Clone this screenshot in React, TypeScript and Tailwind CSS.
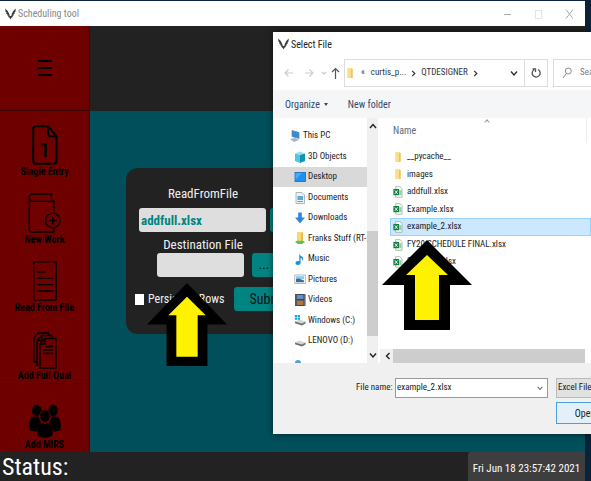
import type { ReactNode } from "react";

function Emblem({ className }: { className: string }) {
  return (
    <svg viewBox="0 0 12 12" className={className} fill="#3a3a3a" aria-hidden="true">
      <path d="M0.2 0L3 2.6L4.6 6L5.2 8.2H6.8L7.4 6L9 2.6L11.8 0L11.400 3.600L10.400 4.400L10.600 5.600L9.300 6.200L9.500 7.600L8.300 8L8.400 9.400L7 10.200L6 12L5 10.200L3.600 9.400L3.700 8L2.500 7.600L2.700 6.200L1.400 5.600L1.600 4.400L0.600 3.600Z" />
    </svg>
  );
}

function SingleEntryIcon() {
  return (
    <svg viewBox="0 0 26 40" className="h-10 w-[26px]" fill="none" stroke="#000" strokeWidth="2" aria-hidden="true">
      <path d="M4 1.2H16L24.5 11V35.5Q24.5 38.8 21.5 38.8H4Q1.2 38.8 1.2 35.5V4.5Q1.2 1.2 4 1.2Z" />
      <path d="M16 1.5V8Q16 11.3 19 11.3H24.5" />
      <path d="M9.5 19.500H13.500V32" strokeWidth="2.6" />
    </svg>
  );
}

function NewWorkIcon() {
  return (
    <svg viewBox="0 0 33 40" className="h-10 w-[33px]" fill="none" stroke="#000" strokeWidth="1.3" aria-hidden="true">
      <path d="M24 1H5Q1.2 1 1.2 5V36Q1.2 39 4 39H26V35.5" />
      <path d="M1.2 5.5Q2 8.3 5 8.3H26V18.5M24 1Q22 4.5 24.5 8" />
      <circle cx="24.8" cy="27.5" r="7.3" />
      <path d="M24.8 23.5V31.5M21 27.5H28.6" strokeWidth="1.6" />
    </svg>
  );
}

function ReadFileIcon() {
  return (
    <svg viewBox="0 0 24 40" className="h-10 w-6" fill="none" stroke="#000" strokeWidth="1.3" aria-hidden="true">
      <rect x="0.8" y="0.8" width="22.4" height="38.4" rx="1" />
      <path d="M4 11H13M4 17.3H20M4 23.7H20M4 30H20" />
    </svg>
  );
}

function FullQualIcon() {
  return (
    <svg viewBox="0 0 24 37" className="h-[37px] w-6" fill="none" stroke="#000" strokeWidth="1.3" aria-hidden="true">
      <path d="M12 6.5H23V36H7V12Z" />
      <path d="M12 6.5V12H7" />
      <path d="M7 33H4V8.5L9 3.5H19V6.5M9 3.5V8.5H4" />
      <path d="M4 30H1V5.5L5.5 1H15.5V3.5" />
      <path d="M13 14.5H20M10 18H20M10 21.5H20" />
    </svg>
  );
}

function PeopleIcon() {
  return (
    <svg viewBox="0 0 32 34" className="h-[34px] w-8" fill="#000" aria-hidden="true">
      <ellipse cx="7.8" cy="6.5" rx="4.7" ry="5.7" />
      <ellipse cx="24.2" cy="6.5" rx="4.7" ry="5.7" />
      <path d="M0.3 26V20.5Q0.3 12.8 6 12.5H9.5L12 19.5Q8 21.5 7.8 27.5Q3 27.5 0.3 26Z" />
      <path d="M31.7 26V20.5Q31.7 12.8 26 12.5H22.5L20 19.5Q24 21.5 24.2 27.5Q29 27.5 31.7 26Z" />
      <ellipse cx="16" cy="12" rx="5.3" ry="6.4" stroke="#6e0000" strokeWidth="0.9" />
      <path d="M8.3 31V27Q8.3 19.5 14 19L16 20.5L18 19Q23.7 19.5 23.7 27V31Q21 33.8 16 33.8Q11 33.8 8.3 31Z" />
    </svg>
  );
}

function NavIcon({ kind }: { kind: string }) {
  return (
    <svg viewBox="0 0 12 14" className="h-3.5 w-3 shrink-0" aria-hidden="true">
      {kind === "pc" && (
        <>
          <path d="M3 1.5L10 3.5V9.5L3 7.5Z" fill="#2f8fdc" stroke="#6a7f92" strokeWidth="0.7" />
          <path d="M1 10L6 9L10 11L5 13Z" fill="#9fb4c6" />
        </>
      )}
      {kind === "cube" && (
        <>
          <path d="M1 3.5L6 1.5L11 3.5L6 5Z" fill="#8fe3f2" />
          <path d="M1 3.5L6 5V13L1 11Z" fill="#4cc9e0" />
          <path d="M11 3.5L6 5V13L11 11Z" fill="#1593b5" />
        </>
      )}
      {kind === "desktop" && (
        <>
          <rect x="1" y="2.5" width="10.5" height="9" fill="#1e90ee" stroke="#0f6dc0" strokeWidth="0.8" />
          <path d="M1.5 10L8 3H1.5Z" fill="#46a9f7" />
        </>
      )}
      {kind === "doc" && (
        <>
          <path d="M2 1.5H8L10.5 4V12.5H2Z" fill="#eef2f5" stroke="#9aa6b0" strokeWidth="0.8" />
          <path d="M3.5 5H9V9H3.5Z" fill="#5ea7da" />
          <path d="M3.5 10.5H9" stroke="#7f95a8" />
        </>
      )}
      {kind === "down" && <path d="M4.2 1.5H7.8V6.5H11L6 12.5L1 6.5H4.2Z" fill="#2f86de" />}
      {kind === "share" && (
        <>
          <path d="M3 1H9V11H3Z" fill="#f8d775" />
          <path d="M7 2H9V11H7Z" fill="#e8bb4c" />
          <path d="M1 11Q3 8.500 6 10Q9 8.500 11 11L8 13H4Z" fill="#5fc24c" />
        </>
      )}
      {kind === "music" && (
        <>
          <ellipse cx="4" cy="11" rx="2.6" ry="1.9" fill="#1b8fe0" />
          <path d="M5.3 11V1.5Q6 4 8.5 5Q10 6.5 8.5 9Q8.7 6.5 6.6 6V11Z" fill="#1b8fe0" />
        </>
      )}
      {kind === "pictures" && (
        <>
          <rect x="0.8" y="3" width="10.5" height="8.5" fill="#fff" stroke="#9da6ad" strokeWidth="0.8" />
          <path d="M2 4.2H10V7H2Z" fill="#8cc9ef" />
          <path d="M2 10.3V7L5 6.5L10 8.5V10.3Z" fill="#3d6f8c" />
        </>
      )}
      {kind === "videos" && (
        <>
          <rect x="1" y="1" width="10.5" height="12" fill="#3b4452" />
          <path d="M3 2H9.5V6H3Z" fill="#5f8fd0" />
          <path d="M3 7.5H9.5V12H3Z" fill="#b0763b" />
          <path d="M2 1.5V13M10.6 1.5V13" stroke="#c9ced6" strokeWidth="0.6" strokeDasharray="1 1" />
        </>
      )}
      {(kind === "drive" || kind === "windrive") && (
        <>
          <path d="M1 8.5L5 6.5L11.5 8.5L8 10.5Z" fill="#d3d7da" />
          <path d="M1 8.5L8 10.5V12.5L1 10.2ZM8 10.5L11.5 8.5V10.5L8 12.5Z" fill="#6c7176" />
        </>
      )}
      {kind === "windrive" && <path d="M0.8 2H3V4H0.8ZM3.6 2H6V4H3.6ZM0.8 4.6H3V6.8H0.8ZM3.6 4.6H6V6.8H3.6Z" fill="#13a4e8" />}
    </svg>
  );
}

function FolderIcon() {
  return (
    <svg viewBox="0 0 10 13" className="h-3 w-2.5 shrink-0" aria-hidden="true">
      <path d="M2 1H7V12H2Z" fill="#fbdf8b" />
      <path d="M6 2H8V12H6Z" fill="#eec562" />
    </svg>
  );
}

function ExcelIcon() {
  return (
    <svg viewBox="0 0 10 13" className="h-3 w-2.5 shrink-0" aria-hidden="true">
      <path d="M2.5 0.7H7L9.4 3V12.2H2.5Z" fill="#fff" stroke="#8b9a91" strokeWidth="0.7" />
      <path d="M6.5 4.5H8.8V10H6.5Z" fill="#8ed0a6" />
      <rect x="0" y="3.2" width="6.2" height="6.8" fill="#128043" />
      <path d="M1.6 4.8L4.6 8.5M4.6 4.8L1.6 8.5" stroke="#fff" strokeWidth="1" />
    </svg>
  );
}

function Chevron({ d, className }: { d: string; className: string }) {
  return (
    <svg viewBox="0 0 8 8" className={className} fill="none" stroke="currentColor" strokeWidth="1.4" aria-hidden="true">
      <path d={d} />
    </svg>
  );
}

const UP = "M1 6L4 2.5L7 6";
const DOWN = "M1 2.5L4 6L7 2.5";
const LEFT = "M5.5 1L2.5 4L5.5 7";
const RIGHT = "M2.5 1L5.5 4L2.5 7";

function SideButton({ icon, label }: { icon: ReactNode; label: string }) {
  return (
    <button className="flex h-[68px] w-full flex-col items-center justify-end">
      {icon}
      <span className="text-[10px] leading-[14px] font-bold whitespace-nowrap">{label}</span>
    </button>
  );
}

const places = [
  ["pc", "This PC"],
  ["cube", "3D Objects"],
  ["desktop", "Desktop"],
  ["doc", "Documents"],
  ["down", "Downloads"],
  ["share", "Franks Stuff (RT-."],
  ["music", "Music"],
  ["pictures", "Pictures"],
  ["videos", "Videos"],
  ["windrive", "Windows (C:)"],
  ["drive", "LENOVO (D:)"],
];

const files = ["__pycache__", "images", "addfull.xlsx", "Example.xlsx", "example_2.xlsx", "FY20 SCHEDULE FINAL.xlsx", "Schedule.xlsx"];

function FileDialog() {
  return (
    <section
      aria-label="Select File"
      className="absolute top-8 right-0 left-[273px] flex h-[402px] flex-col overflow-hidden bg-white text-[9px] text-[#222] shadow-[0_0_6px_rgba(0,0,0,0.6)]"
    >
      <header className="flex h-6 shrink-0 items-center gap-0.5 pl-[5px] text-[10px]">
        <Emblem className="h-3 w-[11px]" />
        <h2>Select File</h2>
      </header>

      <div className="flex h-[34px] shrink-0 items-center pl-2 text-[#333]">
        <svg viewBox="0 0 60 14" className="h-3.5 w-[60px] shrink-0" fill="none" stroke="#ccc" strokeWidth="1.2" aria-hidden="true">
          <path d="M12 7H4M7.500 3.5L4 7L7.500 10.5M24 7H32M28.500 3.5L32 7L28.500 10.5" />
          <path d="M41 6L43 8L45 6" />
          <path d="M54.500 13V2.500M51 6L54.500 2.500L58 6" stroke="#555" />
        </svg>
        <div className="ml-[3px] flex h-7 w-[204px] shrink-0 items-center border border-[#ddd]">
          <FolderIcon />
          <span className="ml-1.5">«</span>
          <span className="ml-1.5">curtis_p...</span>
          <Chevron d={RIGHT} className="ml-1 h-[7px] w-[7px]" />
          <span className="ml-1">QTDESIGNER</span>
          <Chevron d={RIGHT} className="ml-1 h-[7px] w-[7px]" />
          <Chevron d={DOWN} className="mr-1.5 ml-auto h-2 w-2" />
          <button aria-label="Refresh" className="flex h-full w-[23px] items-center justify-center border-l border-[#ddd]">
            <svg viewBox="0 0 10 10" className="h-2.5 w-2.5" fill="none" stroke="#555" strokeWidth="1.3" aria-hidden="true">
              <path d="M7 1.500A4 4 0 1 1 3 1.700M1.500 1H4.500V4" />
            </svg>
          </button>
        </div>
        <label className="ml-[5px] flex h-7 min-w-[120px] items-center gap-2 border border-[#ddd] pl-2">
          <svg viewBox="0 0 10 12" className="h-3 w-2.5 shrink-0" fill="none" stroke="#888" aria-hidden="true">
            <circle cx="6.300" cy="4" r="3" />
            <path d="M4.300 6.500L1 11" />
          </svg>
          <input aria-label="Search QTDESIGNER" placeholder="Search QTDESIGNER" className="w-24 outline-none placeholder:text-[#777]" />
        </label>
      </div>

      <div className="flex h-7 shrink-0 items-center gap-5 bg-[#f5f6f7] pl-3 text-[10px] text-[#31476b]">
        <button className="flex items-center gap-1">
          Organize
          <svg viewBox="0 0 4 3" className="h-[3px] w-1" fill="currentColor" aria-hidden="true">
            <path d="M0 0H4L2 3Z" />
          </svg>
        </button>
        <button>New folder</button>
      </div>

      <div className="flex min-h-0 flex-1">
        <nav className="w-[94px] shrink-0 overflow-hidden pt-2">
          <ul className="grid h-[225px] auto-rows-fr">
            {places.map(([kind, name]) => (
              <li key={name} className={`flex items-center gap-0.5 whitespace-nowrap ${kind === "pc" ? "pl-4" : "pl-[21px]"} ${kind === "desktop" ? "bg-[#d9d9d9]" : ""}`}>
                <NavIcon kind={kind} />
                {name}
              </li>
            ))}
          </ul>
          <svg viewBox="0 0 8 4" className="mt-2 ml-[21px] h-1 w-2" aria-hidden="true">
            <circle cx="4" cy="4" r="3" fill="#4ba3cf" />
          </svg>
        </nav>
        <div className="flex w-[11px] shrink-0 flex-col items-center bg-[#f0f0f0]">
          <Chevron d={UP} className="mt-1 h-2 w-2" />
          <div className="mt-auto h-[105px] w-full bg-[#cdcdcd]" />
          <Chevron d={DOWN} className="mt-[15px] mb-1 h-2 w-2" />
        </div>
        <div className="flex min-w-0 flex-1 flex-col pl-0.5">
          <div className="mr-1 flex h-6 shrink-0 items-center border-r border-[#eee] pl-[13px] text-[10px] text-[#5d6b80]">
            Name
            <Chevron d={UP} className="mb-auto ml-[68px] h-1.5 w-1.5 text-[#999]" />
          </div>
          <ul className="mt-1.5 ml-2.5 grid h-[123px] auto-rows-fr">
            {files.map((name, i) => (
              <li
                key={name}
                className={`flex items-center gap-1 border pl-0.5 whitespace-nowrap ${name === "example_2.xlsx" ? "border-[#99d1ff] bg-[#cce8ff]" : "border-transparent"}`}
              >
                {i < 2 ? <FolderIcon /> : <ExcelIcon />}
                {name}
              </li>
            ))}
          </ul>
          <div className="mt-auto mr-1.5 flex h-3.5 items-center gap-px bg-[#f0f0f0] pl-1">
            <Chevron d={LEFT} className="h-2 w-2 shrink-0" />
            <div className="h-full flex-1 bg-[#cdcdcd]" />
          </div>
        </div>
      </div>

      <footer className="flex h-[71px] shrink-0 flex-col gap-1 bg-[#f0f0f0] pt-[15px] pl-[83px]">
        <div className="flex items-center">
          <label htmlFor="filename" className="w-[39px] shrink-0 whitespace-nowrap">
            File name:
          </label>
          <div className="flex h-5 w-[153px] shrink-0 items-center border border-[#999] bg-white pr-1 pl-px">
            <input id="filename" defaultValue="example_2.xlsx" className="min-w-0 flex-1 outline-none" />
            <Chevron d={DOWN} className="h-1.5 w-1.5 text-[#666]" />
          </div>
          <select aria-label="File type" className="ml-2 h-5 w-[90px] shrink-0 appearance-none border border-[#bbb] bg-[#e1e1e1] pl-px">
            <option>Excel File</option>
          </select>
        </div>
        <button className="ml-[200px] h-[22px] w-[58px] shrink-0 border border-[#4a9fdc] bg-[#e3f0fa] text-[10px]">Open</button>
      </footer>
    </section>
  );
}

function Arrow({ className }: { className: string }) {
  return (
    <svg viewBox="0 0 90 90" preserveAspectRatio="none" className={className} aria-hidden="true">
      <path d="M45 0L90 45H68V90H22V45H0Z" fill="#000" />
      <path d="M45 15L66 35H57V80H33V35H24Z" fill="#fff200" />
    </svg>
  );
}

export default function App() {
  return (
    <div className="relative flex min-h-screen flex-col overflow-hidden bg-[#0b2339] pt-px pr-1.5 font-['Roboto_Condensed',Roboto,sans-serif]">
      <header className="flex h-[25px] shrink-0 items-center bg-white pl-[5px] text-[10px] text-[#888]">
        <Emblem className="h-3 w-[11px]" />
        <h1 className="ml-0.5">Scheduling tool</h1>
        <svg viewBox="0 0 72 12" className="mr-3 ml-auto h-3 w-[72px]" fill="none" stroke="#aaa" aria-hidden="true">
          <path d="M3 6.500H10M65 1.500L72 10.500M72 1.500L65 10.500" />
          <rect x="34.500" y="2.500" width="6" height="8" stroke="#e4e4e4" />
        </svg>
      </header>

      <div className="flex flex-1">
        <aside className="flex w-[90px] shrink-0 flex-col border-r border-[#560000] bg-[#6e0000]">
          <button aria-label="Menu" className="flex h-[85px] items-center justify-center border-b border-[#380000]">
            <svg viewBox="0 0 14 16" className="h-4 w-3.5" stroke="#000" strokeWidth="2" aria-hidden="true">
              <path d="M0 1H14M0 8H14M0 15H14" />
            </svg>
          </button>
          <SideButton icon={<SingleEntryIcon />} label="Single Entry" />
          <SideButton icon={<NewWorkIcon />} label="New Work" />
          <SideButton icon={<ReadFileIcon />} label="Read From File" />
          <SideButton icon={<FullQualIcon />} label="Add Full Qual" />
          <div className="border-t border-[#5c0000]">
            <SideButton icon={<PeopleIcon />} label="Add MIRS" />
          </div>
        </aside>

        <div className="flex min-w-0 flex-1 flex-col bg-[#004f5a]">
          <div className="h-[85px] shrink-0 bg-[#222]" />
          <main className="pt-[57px] pl-9">
            <form className="flex h-[166px] w-[200px] flex-col rounded-xl bg-[#222] pt-[17px] pl-[9px] text-[13px] text-[#f0f0f0]" onSubmit={(e) => e.preventDefault()}>
              <label htmlFor="source" className="h-[23px] w-[132px] pl-1 text-center leading-[18px]">
                ReadFromFile
              </label>
              <div className="flex gap-1 pl-1">
                <input
                  id="source"
                  defaultValue="addfull.xlsx"
                  className="h-6 w-[127px] rounded-[3px] bg-[#dedede] pl-0.5 font-bold text-[#008482] outline-none"
                />
                <button type="button" className="h-6 w-10 rounded-[3px] bg-[#008482] text-[#111]">
                  ...
                </button>
              </div>
              <label htmlFor="destination" className="h-[21px] w-[132px] pt-1 pl-1 text-center leading-[18px]">
                Destination File
              </label>
              <div className="flex gap-2 pl-[22px]">
                <input id="destination" className="h-6 w-[87px] rounded-[3px] bg-[#dedede] outline-none" />
                <button type="button" className="h-6 w-6 rounded-[3px] bg-[#008482] text-[#111]">
                  ...
                </button>
              </div>
              <div className="mt-2.5 flex items-center">
                <input id="persist" type="checkbox" className="h-[11px] w-[9px] appearance-none bg-white" />
                <label htmlFor="persist" className="ml-1 w-[86px] text-[12px] whitespace-nowrap">
                  Persistent Rows
                </label>
                <button className="h-6 w-[70px] rounded-[3px] bg-[#008482] text-[14px] text-[#111]">Submit</button>
              </div>
            </form>
          </main>
        </div>
      </div>

      <footer className="flex h-[29px] shrink-0 items-stretch justify-between bg-[#222] text-white">
        <p className="pl-0.5 text-[24px] leading-[30px]">Status:</p>
        <p className="flex w-[117px] items-center justify-center rounded-tl-[3px] bg-[#3e3e3e] pt-1.5 text-[11px]">Fri Jun 18 23:57:42 2021</p>
      </footer>

      <FileDialog />
      <Arrow className="absolute top-[283px] left-[147px] h-[83px] w-20" />
      <Arrow className="absolute top-[240px] left-[382px] h-[90px] w-[90px]" />
    </div>
  );
}
